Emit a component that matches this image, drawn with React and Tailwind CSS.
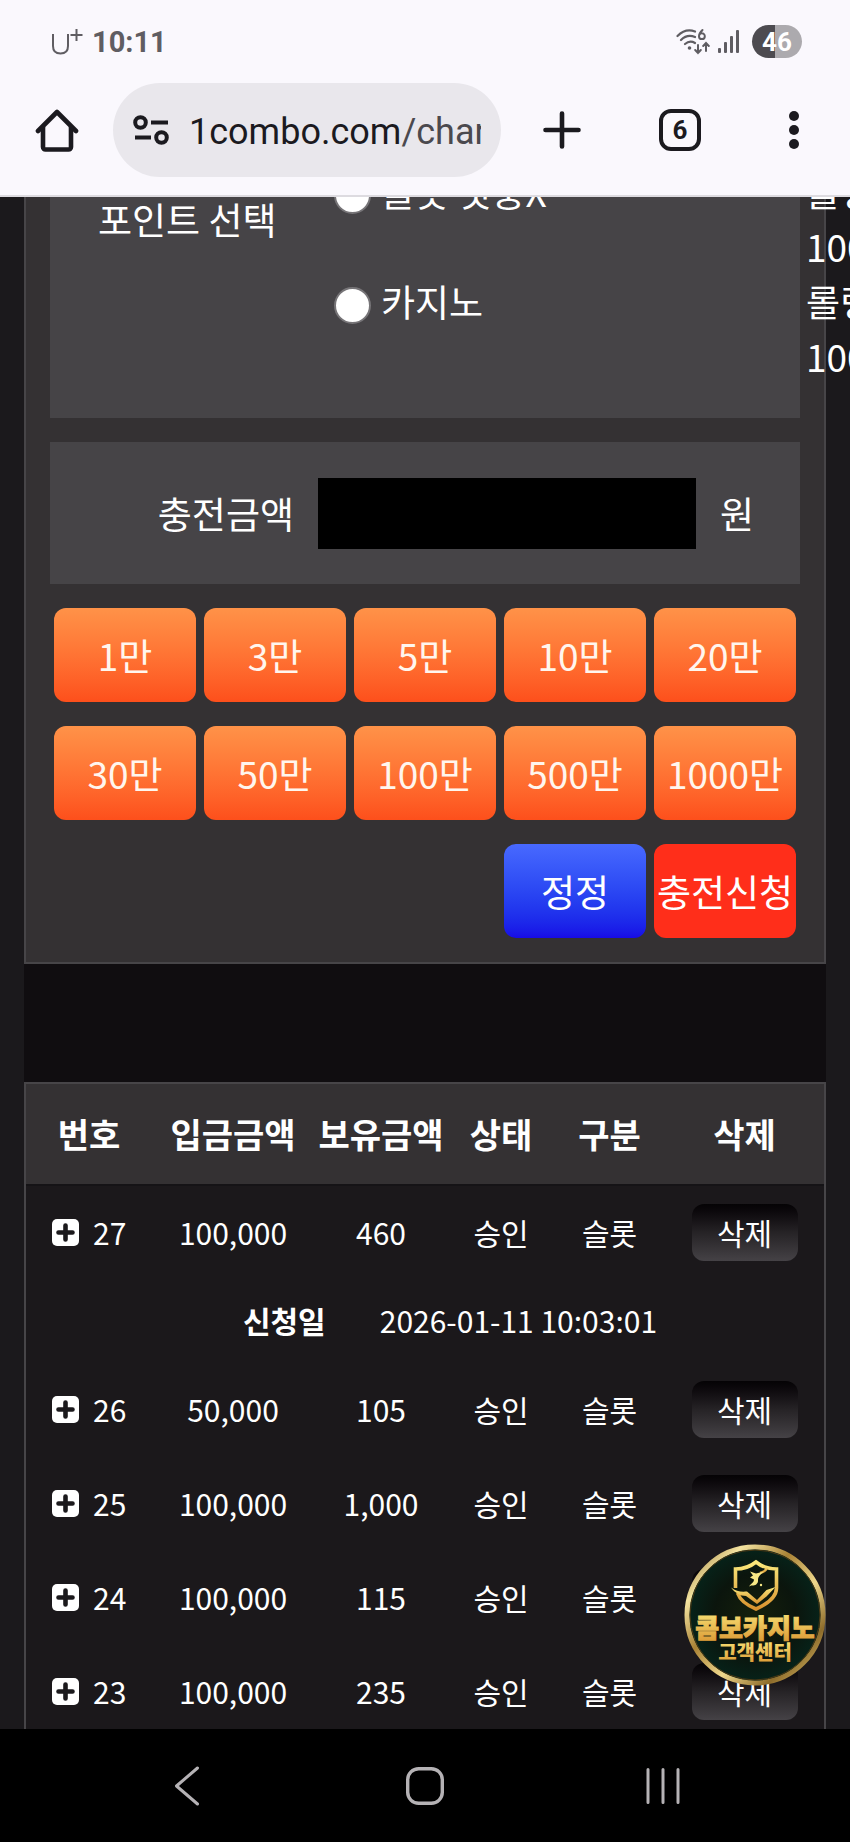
import React, { useState } from 'react';

const QUICK_AMOUNTS = ['1만', '3만', '5만', '10만', '20만', '30만', '50만', '100만', '500만', '1000만'];

const POINT_OPTIONS = [
    { id: 'slot', label: '슬롯 첫충X', rolling: '100%' },
    { id: 'casino', label: '카지노', rolling: '100%' },
];

const HISTORY = [
    { id: 27, deposit: '100,000', balance: '460', status: '승인', type: '슬롯', date: '2026-01-11 10:03:01' },
    { id: 26, deposit: '50,000', balance: '105', status: '승인', type: '슬롯' },
    { id: 25, deposit: '100,000', balance: '1,000', status: '승인', type: '슬롯' },
    { id: 24, deposit: '100,000', balance: '115', status: '승인', type: '슬롯' },
    { id: 23, deposit: '100,000', balance: '235', status: '승인', type: '슬롯' },
];

const StatusBar = () => (
    <div className="flex h-[83px] items-center justify-between px-12 text-[#5f5d62]">
        <div className="flex items-center gap-2 pl-1">
            <svg width="32" height="28" viewBox="0 0 32 28" fill="none" stroke="currentColor" strokeWidth="2">
                <path d="M1 6v12c0 5 3 7.500 7.500 7.500S16 23 16 18V6" />
                <path d="M24.500 1v12M18.500 7h12" />
            </svg>
            <span className="text-[29px] leading-10 font-bold">10:11</span>
        </div>
        <div className="flex items-center gap-2">
            <svg width="34" height="28" viewBox="0 0 34 28" fill="none" stroke="currentColor" strokeWidth="2.200" strokeLinecap="round">
                <path d="M1.500 8C7 2.500 13.500 1.500 19 3.500M5 12c4-4 9-5 14-3M9 16c3-2.500 6.500-3 10-1" />
                <circle cx="13.500" cy="20" r="1.800" fill="currentColor" stroke="none" />
                <path d="M26.500 2c-2 2-3.500 4-3.500 6.200a2.900 2.900 0 1 0 2.900-2.900c-1 0-2 .5-2.500 1.300" strokeWidth="2" />
                <path d="M22 17v8m-2.800-3 2.800 3 2.800-3M30 23v-8m-2.800 3 2.800-3 2.800 3" strokeWidth="2" />
            </svg>
            <svg width="22" height="24" viewBox="0 0 22 24" fill="currentColor">
                <rect x="0" y="18" width="3" height="5" rx="1" />
                <rect x="6" y="12" width="3" height="11" rx="1" />
                <rect x="12" y="6" width="3" height="17" rx="1" />
                <rect x="18" y="0" width="3" height="23" rx="1" />
            </svg>
            <span className="ml-1 flex h-[33px] w-[50px] items-center justify-center rounded-full bg-linear-to-r from-[#4d4b50] from-46% to-[#acaaae] to-46% text-[26px] leading-8 font-bold text-white">
                46
            </span>
        </div>
    </div>
);

const AddressBar = () => (
    <div className="flex h-[94px] items-center text-[#1b1a1f]">
        <button type="button" aria-label="홈" className="flex w-[113px] justify-center">
            <svg width="44" height="44" viewBox="0 0 44 44" fill="none" stroke="currentColor" strokeWidth="4.600" strokeLinejoin="round">
                <path d="M3 23 22 4l19 19" strokeLinecap="round" />
                <path d="M8 19v20a2.500 2.500 0 0 0 2.500 2.500h23A2.500 2.500 0 0 0 36 39V19" />
            </svg>
        </button>
        <button type="button" className="flex h-full min-w-0 flex-1 items-center rounded-full bg-[#e9e7ec] px-5">
            <svg className="shrink-0" width="36" height="30" viewBox="0 0 36 30" fill="none" stroke="currentColor" strokeWidth="4">
                <circle cx="7.500" cy="7.500" r="5.300" />
                <path d="M18 7.500h17M2 22.500h16" />
                <circle cx="28.500" cy="22.500" r="5.300" />
            </svg>
            <span className="ml-5 overflow-hidden pt-[3px] text-[36px] leading-[48px] whitespace-nowrap">
                1combo.com<span className="text-[#4b494e]">/charge</span>
            </span>
        </button>
        <button type="button" aria-label="새 탭" className="flex w-[122px] justify-center">
            <svg width="38" height="38" viewBox="0 0 38 38" stroke="currentColor" strokeWidth="4.600" strokeLinecap="round">
                <path d="M19 2.500v33M2.500 19h33" />
            </svg>
        </button>
        <button type="button" aria-label="탭 6개" className="flex w-[114px] justify-center">
            <span className="flex size-[42px] items-center justify-center rounded-xl border-4 border-current text-[26px] leading-7 font-bold">
                6
            </span>
        </button>
        <button type="button" aria-label="메뉴" className="flex w-[113px] justify-center">
            <svg width="12" height="40" viewBox="0 0 12 40" fill="currentColor">
                <circle cx="6" cy="6" r="5" />
                <circle cx="6" cy="20" r="5" />
                <circle cx="6" cy="34" r="5" />
            </svg>
        </button>
    </div>
);

const ChargeForm = () => {
    const [amount, setAmount] = useState('');
    const amountButton = 'h-[94px] rounded-xl bg-linear-to-b from-[#ff9248] to-[#fd4f1b] text-[#fff6ee]';

    return (
        <form className="-mt-[87px] border-2 border-[#474548] bg-[#343133] p-6 text-[37px] leading-[55px]">
            {/* Point type */}
            <fieldset className="mb-6 flex items-start bg-[#464447] pt-7 pb-[34px]">
                <div className="w-[284px] shrink-0 pt-7 pl-12">포인트 선택</div>
                <div className="w-0 flex-1">
                    {POINT_OPTIONS.map((option) => (
                        <div key={option.id} className="flex w-max items-start">
                            <label className="flex w-[472px] items-center gap-[10px]">
                                <input
                                    type="radio"
                                    name="point"
                                    value={option.id}
                                    className="mt-2 size-[37px] appearance-none rounded-full border-2 border-[#767477] bg-white"
                                />
                                {option.label}
                            </label>
                            <div>롤링<br />{option.rolling}</div>
                        </div>
                    ))}
                </div>
            </fieldset>

            {/* Amount */}
            <div className="mb-6 flex h-[142px] items-center bg-[#464447]">
                <label htmlFor="amount" className="w-[268px] pr-6 text-right">충전금액</label>
                <input
                    id="amount"
                    type="text"
                    className="h-[71px] min-w-0 flex-1 bg-black px-4 outline-none"
                    value={amount}
                    onChange={(e) => setAmount(e.target.value)}
                />
                <span className="w-[104px] pl-6">원</span>
            </div>

            <div className="grid grid-cols-5 gap-x-2 gap-y-6 px-1">
                {QUICK_AMOUNTS.map((label) => (
                    <button key={label} type="button" className={amountButton} onClick={() => setAmount(label)}>
                        {label}
                    </button>
                ))}
                <button
                    type="button"
                    className="col-start-4 h-[94px] rounded-xl bg-linear-to-b from-[#4869ff] to-[#180ae6]"
                    onClick={() => setAmount('')}
                >
                    정정
                </button>
                <button type="button" className="h-[94px] rounded-xl bg-[#ff2e1a] whitespace-nowrap">충전신청</button>
            </div>
        </form>
    );
};

const HistoryRow = ({ row }) => (
    <>
        <tr className="h-[94px]">
            <td>
                <button type="button" className="flex items-center gap-[14px] pl-[26px]">
                    <svg width="27" height="27" viewBox="0 0 27 27">
                        <rect width="27" height="27" rx="5" fill="#fff" />
                        <path d="M13.500 6.500v14M6.500 13.500h14" stroke="#1b191c" strokeWidth="4.600" strokeLinecap="round" />
                    </svg>
                    {row.id}
                </button>
            </td>
            <td>{row.deposit}</td>
            <td>{row.balance}</td>
            <td>{row.status}</td>
            <td>{row.type}</td>
            <td>
                <button type="button" className="h-[57px] w-[106px] rounded-xl bg-linear-to-b from-[#050305] via-[#262326] to-[#454246] align-middle">
                    삭제
                </button>
            </td>
        </tr>
        {row.date && (
            <tr className="h-[83px]">
                <td colSpan="6">
                    <div className="flex justify-center gap-[54px] pl-[50px]">
                        <strong className="font-bold">신청일</strong>
                        <span>{row.date}</span>
                    </div>
                </td>
            </tr>
        )}
    </>
);

const HistoryTable = () => (
    <div className="border-2 border-[#474548] bg-[#1b181b]">
        <table className="w-full table-fixed text-center text-[30px] leading-[45px]">
            <colgroup>
                <col className="w-[126px]" />
                <col className="w-[162px]" />
                <col className="w-[134px]" />
                <col className="w-[106px]" />
                <col className="w-[111px]" />
                <col className="w-[159px]" />
            </colgroup>
            <thead className="border-b-2 border-[#151316] bg-[#343133] text-[34px] leading-[50px]">
                <tr className="h-[101px] whitespace-nowrap">
                    <th>번호</th>
                    <th>입금금액</th>
                    <th>보유금액</th>
                    <th>상태</th>
                    <th>구분</th>
                    <th>삭제</th>
                </tr>
            </thead>
            <tbody>
                {HISTORY.map((row) => (
                    <HistoryRow key={row.id} row={row} />
                ))}
            </tbody>
        </table>
    </div>
);

const SupportBadge = () => (
    <a href="#support" aria-label="콤보카지노 고객센터" className="absolute right-6 bottom-[43px]">
        <svg width="142" height="142" viewBox="0 0 142 142">
            <defs>
                <linearGradient id="ring" x1="0" y1="0" x2="1" y2="1">
                    <stop offset="0" stopColor="#8a6a2c" />
                    <stop offset="0.200" stopColor="#f4e3a0" />
                    <stop offset="0.400" stopColor="#a98235" />
                    <stop offset="0.600" stopColor="#efd88c" />
                    <stop offset="0.800" stopColor="#8d6c2b" />
                    <stop offset="1" stopColor="#e9cb74" />
                </linearGradient>
                <linearGradient id="gold" x1="0" y1="0" x2="0" y2="1">
                    <stop offset="0" stopColor="#fbe97c" />
                    <stop offset="1" stopColor="#d9932f" />
                </linearGradient>
                <radialGradient id="felt">
                    <stop offset="0" stopColor="#15200c" />
                    <stop offset="0.600" stopColor="#0b150d" />
                    <stop offset="1" stopColor="#06231a" />
                </radialGradient>
            </defs>
            <circle cx="71" cy="71" r="68" fill="url(#felt)" stroke="url(#ring)" strokeWidth="5" />
            <circle cx="71" cy="71" r="65" fill="none" stroke="#4c3914" strokeWidth="1" />
            {/* Shield */}
            <g fill="none" stroke="url(#gold)" strokeWidth="3.600">
                <path d="M51.500 44V25c8 0 15-2.500 20.500-7 5.500 4.500 13 7 20.500 7v19c0 8-7 15-20.500 21C62 61 56 56 53.500 49" />
                <path d="M83 22c0 4-3 6-7 7" strokeWidth="2.400" />
            </g>
            <path d="M47 43.500c5 4 10 4.500 16 4l10 8.500 9.500-10 9-3-9 9.500L73 60l-11-8c-6 0-11-3-15-8.500Z" fill="url(#gold)" />
            <path d="m66 27.500 6 2 8-2c-2 2-4 3-5 5-2 3 0 5-2 7-2 3-5 1-8 3 2-3 5-4 5-7l-4-2 3-2-3-4Z" fill="#f7e886" />
            <circle cx="77" cy="41" r="1.200" fill="#f7e886" />
            <g fill="url(#gold)" textAnchor="middle" className="font-['Noto_Sans_CJK_KR',sans-serif] font-black">
                <text x="71" y="94" fontSize="26" stroke="url(#gold)" strokeWidth="1">콤보카지노</text>
                <text x="71" y="116" fontSize="20">고객센터</text>
            </g>
        </svg>
    </a>
);

const NavBar = () => (
    <nav className="flex h-[113px] shrink-0 items-center bg-black px-[68px] text-[#b5b2b5]">
        <button type="button" aria-label="뒤로" className="flex flex-1 justify-center">
            <svg width="26" height="40" viewBox="0 0 26 40" fill="none" stroke="currentColor" strokeWidth="3" strokeLinecap="round" strokeLinejoin="round">
                <path d="M23.500 2 2.500 20l21 18" />
            </svg>
        </button>
        <button type="button" aria-label="홈 화면" className="flex flex-1 justify-center">
            <svg width="40" height="40" viewBox="0 0 40 40" fill="none" stroke="currentColor" strokeWidth="3.400">
                <rect x="2.700" y="2.700" width="34.600" height="34.600" rx="11" />
            </svg>
        </button>
        <button type="button" aria-label="최근 앱" className="flex flex-1 justify-center">
            <svg width="36" height="38" viewBox="0 0 36 38" stroke="currentColor" strokeWidth="3" strokeLinecap="round">
                <path d="M3 2.500v33M18 2.500v33M33 2.500v33" />
            </svg>
        </button>
    </nav>
);

const App = () => (
    <div className="flex h-screen flex-col overflow-hidden bg-[#1b191c] font-['Noto_Sans_CJK_KR',sans-serif] text-white">
        {/* Browser chrome */}
        <header className="shrink-0 border-b-2 border-[#dddbe0] bg-[#faf8fd] pb-[18px] font-[Roboto,'Noto_Sans_CJK_KR',sans-serif]">
            <StatusBar />
            <AddressBar />
        </header>

        {/* Page */}
        <div className="relative min-h-0 flex-1">
            <main className="h-full overflow-hidden px-6">
                <div className="bg-[#100d10]">
                    <ChargeForm />
                    <div className="h-[118px]" />
                    <HistoryTable />
                </div>
            </main>
            <SupportBadge />
        </div>

        <NavBar />
    </div>
);

export default App;
